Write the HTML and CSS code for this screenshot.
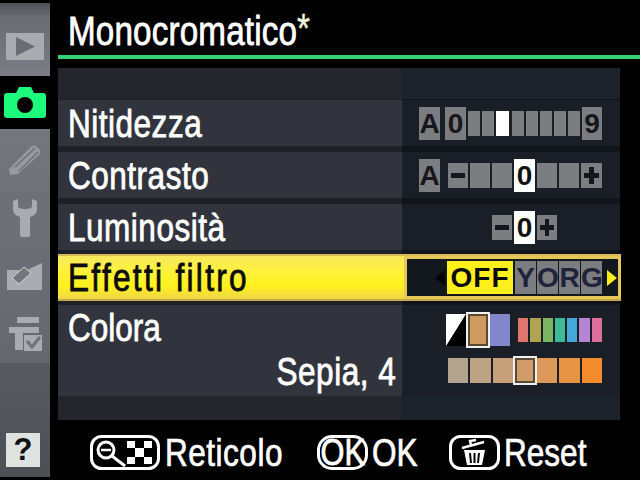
FILE: index.html
```html
<!DOCTYPE html>
<html lang="it">
<head>
    <meta charset="utf-8">
    <title>Monocromatico</title>
    <link rel="stylesheet" href="styles.css">
</head>
<body>
    <div class="sidebar">
        <div class="tab tab-play">
            <svg width="38" height="27" viewBox="0 0 38 27"><rect width="38" height="27" fill="#a9abb0"/><path d="M10 4 L29 13.500 L10 23 Z" fill="#6b6d73"/></svg>
        </div>
        <div class="tab tab-camera">
            <svg width="42" height="33" viewBox="0 0 42 33"><path d="M3 7 H12 L15 1 H27 L30 7 H39 Q42 7 42 10 V29 Q42 32 39 32 H3 Q0 32 0 29 V10 Q0 7 3 7 Z" fill="#1dfb7c"/><circle cx="21" cy="19" r="8" fill="#000"/></svg>
        </div>
        <div class="tab tab-pencil">
            <svg width="32" height="30" viewBox="0 0 32 30"><path d="M0 24 L23 1 Q25 0 27 1 L31 5 Q32 7 31 9 L9 29 L1 30 Z" fill="#97999e"/><path d="M6 22 L26 3 M10 26 L29 7" stroke="#6f7178" stroke-width="1.500"/></svg>
        </div>
        <div class="tab tab-wrench">
            <svg width="24" height="38" viewBox="0 0 24 38"><path d="M0 2 L5 0 V7 Q5 10 12 10 Q19 10 19 7 V0 L24 2 V10 Q24 16 17 18 V36 Q17 38 15 38 H9 Q7 38 7 36 V18 Q0 16 0 10 Z" fill="#a9abb0"/></svg>
        </div>
        <div class="tab tab-retouch">
            <svg width="36" height="28" viewBox="0 0 36 28"><path d="M0 7 H20 L35 0 V27 H0 Z" fill="#a9abb0"/><path d="M5 15 L17 4 L24 10 L12 21 Z" fill="#74767c" stroke="#d4d5d8"/></svg>
        </div>
        <div class="tab tab-recent">
            <svg width="33" height="34" viewBox="0 0 33 34"><path d="M8 0 H30 V6 H8 Z M0 10 H30 V16 H14 V33 H6 V16 H0 Z" fill="#a9abb0"/><rect x="15" y="18" width="18" height="16" fill="#a9abb0"/><path d="M18 24 L23 30 L31 20" stroke="#6f7178" stroke-width="3" fill="none"/></svg>
        </div>
        <div class="tab-rest">
            <span class="help">?</span>
        </div>
    </div>

    <div class="main">
        <h1 class="title"><span class="narrow">Monocromatico<span class="star">*</span></span></h1>
        <div class="rule"></div>

        <div class="panel">
            <div class="row row-top"><div class="label"></div><div class="value"></div></div>

            <div class="row">
                <div class="label"><span class="narrow">Nitidezza</span></div>
                <div class="value">
                    <span class="seg tall wide letter spaced">A</span>
                    <span class="seg tall wide letter">0</span>
                    <span class="seg thin"></span>
                    <span class="seg thin"></span>
                    <span class="seg thin tall-thin on"></span>
                    <span class="seg thin"></span>
                    <span class="seg thin"></span>
                    <span class="seg thin"></span>
                    <span class="seg thin"></span>
                    <span class="seg thin"></span>
                    <span class="seg tall letter">9</span>
                </div>
            </div>

            <div class="row">
                <div class="label"><span class="narrow">Contrasto</span></div>
                <div class="value">
                    <span class="seg tall wide letter spaced-more">A</span>
                    <span class="seg minus"></span>
                    <span class="seg"></span>
                    <span class="seg"></span>
                    <span class="seg tall on letter">0</span>
                    <span class="seg"></span>
                    <span class="seg"></span>
                    <span class="seg wide plus"></span>
                </div>
            </div>

            <div class="row">
                <div class="label"><span class="narrow">Luminosità</span></div>
                <div class="value value-short">
                    <span class="seg minus"></span>
                    <span class="seg tall on letter">0</span>
                    <span class="seg plus"></span>
                </div>
            </div>

            <div class="row row-active">
                <div class="label"><span class="narrow narrow-loose">Effetti filtro</span></div>
                <div class="value value-active">
                    <span class="arrow-left"></span>
                    <span class="off">OFF</span>
                    <span class="seg filter letter">Y</span>
                    <span class="seg filter letter">O</span>
                    <span class="seg filter letter">R</span>
                    <span class="seg filter letter">G</span>
                    <span class="arrow-right"></span>
                </div>
            </div>

            <div class="row row-colora">
                <div class="label label-colora">
                    <span class="narrow narrow-tight">Colora</span>
                    <span class="sub"><span class="narrow narrow-right">Sepia, 4</span></span>
                </div>
                <div class="value value-colora">
                    <div class="tone-line">
                        <span class="bw"></span>
                        <span class="sw sw-main picked" style="background:#cf9a60"></span>
                        <span class="sw sw-main" style="background:#8388cc"></span>
                        <span class="mini-list">
                            <span class="mini" style="background:#e0746e"></span>
                            <span class="mini" style="background:#b0a452"></span>
                            <span class="mini" style="background:#7ab562"></span>
                            <span class="mini" style="background:#3bbb96"></span>
                            <span class="mini" style="background:#42a9d8"></span>
                            <span class="mini" style="background:#b584d4"></span>
                            <span class="mini" style="background:#dc6f9c"></span>
                        </span>
                    </div>
                    <div class="tone-line tone-second">
                        <span class="sw" style="background:#b3a48f"></span>
                        <span class="sw" style="background:#bca384"></span>
                        <span class="sw" style="background:#c6a078"></span>
                        <span class="sw picked" style="background:#d09c69"></span>
                        <span class="sw" style="background:#dc9858"></span>
                        <span class="sw" style="background:#e69346"></span>
                        <span class="sw" style="background:#f48b2c"></span>
                    </div>
                </div>
            </div>

            <div class="row row-bottom"><div class="label"></div><div class="value"></div></div>
        </div>

        <div class="footer">
            <span class="key">
                <svg width="70" height="35" viewBox="0 0 70 35">
                    <rect x="1.500" y="1.500" width="67" height="32" rx="10" fill="none" stroke="#fff" stroke-width="3"/>
                    <circle cx="16" cy="15" r="8" fill="none" stroke="#fff" stroke-width="3"/>
                    <path d="M11 15 H21" stroke="#fff" stroke-width="2.500"/>
                    <path d="M22 21 L35 31" stroke="#fff" stroke-width="3"/>
                    <rect x="37" y="6" width="25" height="23" fill="#fff"/>
                    <path d="M45 6 H54 V13 H45 Z M37 13 H45 V22 H37 Z M54 13 H62 V22 H54 Z M45 22 H54 V29 H45 Z" fill="#000"/>
                </svg>
            </span>
            <span class="foot-label label-reticolo"><span class="narrow">Reticolo</span></span>
            <span class="key-ok"><span class="narrow narrow-center narrow-tight">OK</span></span>
            <span class="foot-label label-ok"><span class="narrow narrow-tight">OK</span></span>
            <span class="key key-trash">
                <svg width="51" height="35" viewBox="0 0 51 35">
                    <rect x="1.500" y="1.500" width="48" height="32" rx="10" fill="none" stroke="#fff" stroke-width="3"/>
                    <path d="M13 13 L35 7 M22 10 L21 6 L27 5" stroke="#fff" stroke-width="2.500" fill="none"/>
                    <path d="M15 15 H36 L33 30 H18 Z" fill="#fff"/>
                    <path d="M21 18 L22 28 M25.500 18 V28 M30 18 L29 28" stroke="#000" stroke-width="2"/>
                </svg>
            </span>
            <span class="foot-label label-reset"><span class="narrow narrow-tight">Reset</span></span>
        </div>
    </div>
</body>
</html>
```

FILE: styles.css
```css
* {
    box-sizing: border-box;
}

html, body {
    margin: 0;
    padding: 0;
}

body {
    width: 640px;
    height: 480px;
    overflow: hidden;
    background: #000;
    color: #fff;
    display: flex;
    font-family: "Liberation Sans", sans-serif;
}

/* the camera font is condensed, no narrow family is installed */
.narrow {
    display: inline-block;
    transform: scaleX(0.83);
    transform-origin: left center;
    letter-spacing: 0.600px;
    white-space: nowrap;
}

.narrow-right {
    transform-origin: right center;
}

.narrow-center {
    transform-origin: center center;
}

.narrow-loose {
    letter-spacing: 2.800px;
}

.narrow-tight {
    letter-spacing: 0;
}

/* left tab strip */
.sidebar {
    width: 50px;
    height: 474px;
    margin-top: 3px;
    display: flex;
    flex-direction: column;
    flex: none;
}

.tab {
    display: flex;
    align-items: center;
    justify-content: center;
}

.tab-play {
    height: 73px;
    padding-top: 14px;
    background: linear-gradient(#4f5157 0, #6a6c73 14px, #7b7d84 100%);
}

.tab-camera {
    height: 53px;
    background: #000;
}

.tab-pencil {
    height: 61px;
    background: linear-gradient(#74767d, #70727a);
}

.tab-wrench {
    height: 55px;
    background: #6e7077;
}

.tab-retouch {
    height: 60px;
    padding-top: 4px;
    background: linear-gradient(#6c6e75, #696b72);
}

.tab-recent {
    height: 58px;
    background: linear-gradient(#696b72, #65676e);
}

.tab-rest {
    flex: 1;
    display: flex;
    align-items: flex-end;
    justify-content: flex-start;
    padding: 0 0 10px 6px;
    background: linear-gradient(#585a61, #4d4f55);
}

.help {
    width: 34px;
    height: 34px;
    background: #dfe3df;
    color: #111;
    font: bold 31px/34px "Liberation Sans", sans-serif;
    text-align: center;
}

/* main column */
.main {
    flex: 1;
    padding-left: 8px;
    padding-right: 20px;
    display: flex;
    flex-direction: column;
    min-width: 0;
}

.title {
    margin: 0;
    height: 55px;
    padding: 9px 0 0 10px;
    font-size: 40px;
    line-height: 44px;
    font-weight: normal;
    -webkit-text-stroke: 0.8px #fff;
}

.title .narrow {
    letter-spacing: 0.200px;
}

.star {
    font-size: 40px;
    line-height: 0;
    color: #f4f4d8;
    vertical-align: 3px;
    -webkit-text-stroke: 0.5px #f4f4d8;
}

.rule {
    height: 4px;
    margin-right: -20px;
    background: #37d073;
}

.panel {
    margin-top: 9px;
    height: 352px;
    display: flex;
    flex-direction: column;
    background: linear-gradient(to right, #1d2026 344px, #11141a 344px);
}

.row {
    display: flex;
    height: 46px;
    margin-bottom: 6px;
}

.row-top {
    height: 32px;
    margin-bottom: 1px;
}

.label {
    width: 344px;
    padding-left: 10px;
    background: #31343c;
    font-size: 38px;
    line-height: 49px;
    -webkit-text-stroke: 0.8px #fff;
    white-space: nowrap;
}

.row-top .label {
    background: #23262d;
}

.value {
    flex: 1;
    display: flex;
    align-items: center;
    justify-content: flex-end;
    gap: 2px;
    padding-right: 18px;
    background: #1a1e26;
}

.row-top .value {
    background: #1d232c;
}

.value-short {
    padding-right: 63px;
}

/* highlighted row */
.row-active {
    height: 47px;
    margin-top: -2px;
    margin-bottom: 4px;
    margin-right: -1px;
    background: linear-gradient(#f8e860, #fff23c 35%, #fff01c 70%, #efd64a);
    border-top: 2px solid #d7bc55;
    border-bottom: 2px solid #c6a94a;
}

.row-active .label {
    width: 346px;
    background: none;
    color: #0c0c0c;
    -webkit-text-stroke: 0.8px #0c0c0c;
    line-height: 45px;
}

.value-active {
    margin: 0;
    gap: 1px;
    border: 3px solid #e6c75a;
    background: #13171e;
    padding-right: 1px;
}

.row-colora {
    height: 91px;
    margin-bottom: 0;
}

.label-colora {
    display: flex;
    flex-direction: column;
    align-items: flex-start;
    line-height: 47px;
}

.sub {
    align-self: stretch;
    text-align: right;
    padding-right: 6px;
    margin-top: -3px;
}

.value-colora {
    flex-direction: column;
    align-items: flex-end;
    justify-content: flex-start;
    gap: 0;
    padding-top: 7px;
}

.row-bottom {
    height: 24px;
    margin: 0;
}

.row-bottom .label {
    background: #23262d;
}

.row-bottom .value {
    background: #1d232c;
}

/* level segments */
.seg {
    position: relative;
    width: 20px;
    height: 25px;
    background: #7c7d80;
    color: #15171c;
    flex: none;
}

.letter {
    font: bold 28px/25px "Liberation Sans", sans-serif;
    text-align: center;
}

.seg.tall {
    height: 33px;
    line-height: 33px;
}

.seg.wide {
    width: 21px;
}

.seg.thin {
    width: 12px;
}

.seg.tall-thin {
    width: 13px;
    margin-right: 1px;
}

.seg.spaced {
    margin-right: 3px;
}

.seg.spaced-more {
    margin-right: 6px;
}

.seg.on {
    background: #fff;
    color: #111;
    width: 21px;
}

.seg.thin.on {
    width: 13px;
}

.minus::before,
.plus::before,
.plus::after {
    content: "";
    position: absolute;
    background: #15171c;
    left: 3px;
    right: 3px;
    top: 10px;
    height: 5px;
}

.plus::after {
    left: 8px;
    right: 8px;
    top: 4px;
    height: 17px;
}

/* filter row */
.arrow-left {
    width: 0;
    height: 0;
    margin-right: 1px;
    border-style: solid;
    border-width: 8px 10px 8px 0;
    border-color: transparent #050505 transparent transparent;
}

.arrow-right {
    width: 0;
    height: 0;
    margin-left: 4px;
    border-style: solid;
    border-width: 8px 0 8px 10px;
    border-color: transparent transparent transparent #fff01c;
}

.off {
    width: 66px;
    height: 33px;
    margin-right: 1px;
    background: #fff01c;
    color: #0b0b0b;
    font: bold 28px/33px "Liberation Sans", sans-serif;
    letter-spacing: 1px;
    text-align: center;
}

.seg.filter {
    width: 21px;
    height: 33px;
    line-height: 33px;
    color: #20233a;
}

/* colour swatches */
.tone-line {
    display: flex;
    align-items: center;
    height: 36px;
    gap: 2px;
}

.tone-second {
    margin-top: 10px;
    height: 25px;
}

.bw {
    width: 20px;
    height: 32px;
    background: linear-gradient(to bottom right, #fff 49%, #000 51%);
}

.sw {
    width: 20.300px;
    height: 25px;
}

.sw-main {
    width: 20px;
    height: 32px;
}

.sw.picked {
    outline: 2px solid #f0f0ee;
    border: 2px solid #5a4a35;
    z-index: 1;
}

.mini-list {
    display: flex;
    gap: 2px;
    margin-left: 6px;
}

.mini {
    width: 10.300px;
    height: 24px;
}

/* help line */
.footer {
    margin-right: -20px;
    padding-top: 5px;
    display: flex;
    align-items: center;
    height: 60px;
    padding-left: 32px;
    background: #000;
}

.key {
    display: flex;
    flex: none;
}

.foot-label {
    font-size: 38px;
    line-height: 44px;
    -webkit-text-stroke: 0.7px #fff;
    white-space: nowrap;
}

.label-reticolo {
    margin-left: 5px;
    width: 118px;
}

.key-ok {
    margin-left: 34px;
    width: 51px;
    height: 35px;
    border: 3px solid #fff;
    border-radius: 15px;
    font-size: 37px;
    line-height: 29px;
    -webkit-text-stroke: 0.8px #fff;
    display: flex;
    justify-content: center;
    flex: none;
}

.label-ok {
    margin-left: 4px;
    width: 43px;
}

.key-trash {
    margin-left: 34px;
}

.label-reset {
    margin-left: 4px;
}
```
